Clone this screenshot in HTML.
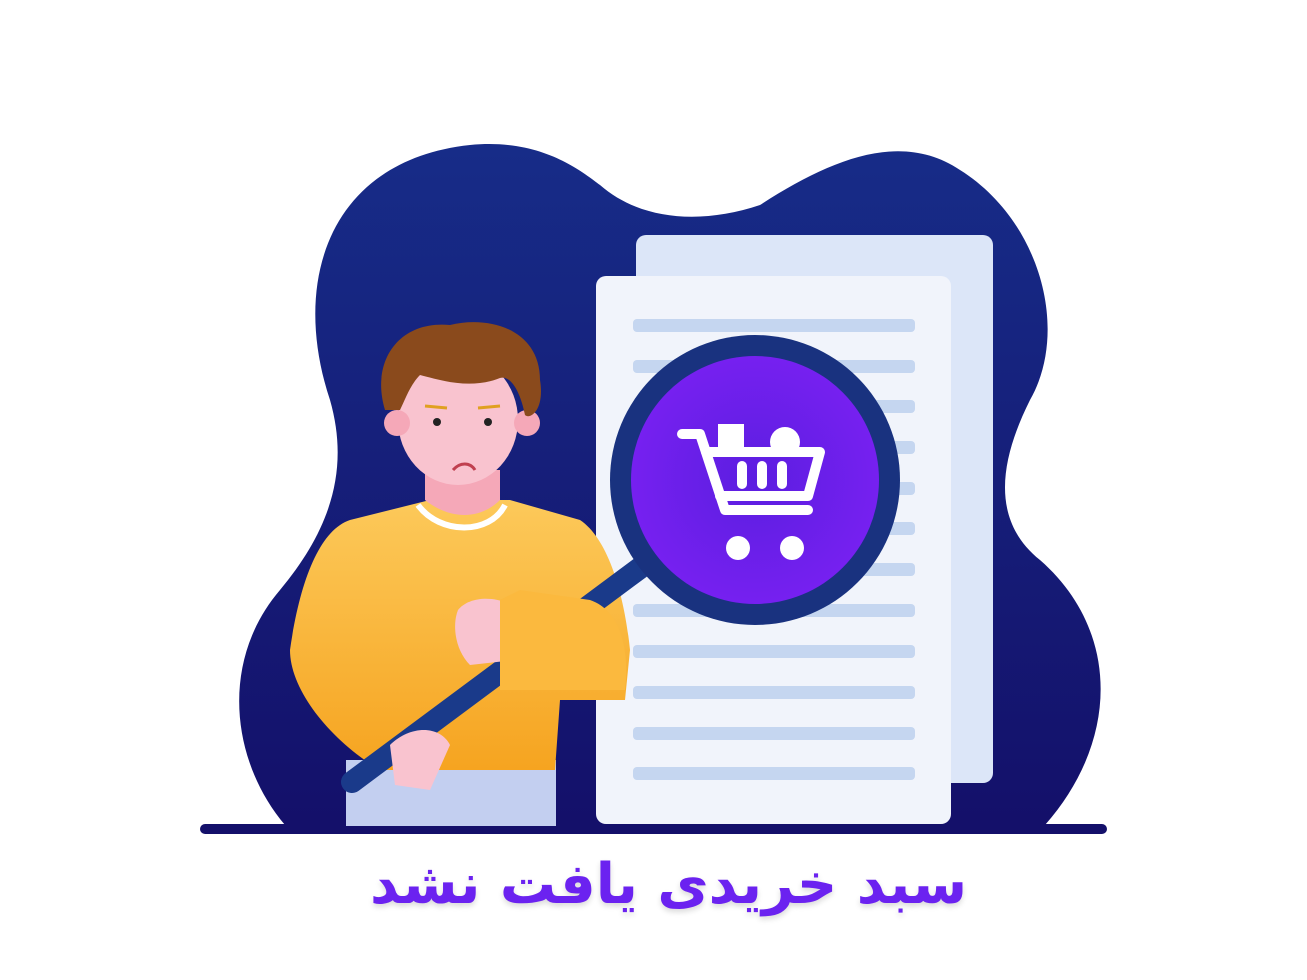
<!DOCTYPE html>
<html><head><meta charset="utf-8"><style>
html,body{margin:0;padding:0;background:#fff;}
body{width:1307px;height:980px;position:relative;overflow:hidden;}
.t{position:absolute;left:0;width:1337px;top:852px;text-align:center;direction:rtl;font-family:"DejaVu Sans",sans-serif;font-weight:bold;font-size:56px;letter-spacing:1px;color:#6b22f0;text-shadow:0 3px 6px rgba(0,0,0,0.15);}
</style></head><body>
<svg width="1307" height="980" viewBox="0 0 1307 980" style="position:absolute;left:0;top:0">
<defs>
<linearGradient id="bg" x1="0" y1="0" x2="0" y2="1"><stop offset="0" stop-color="#172c88"/><stop offset="1" stop-color="#14106a"/></linearGradient>
<linearGradient id="sw" x1="0" y1="0" x2="0" y2="1"><stop offset="0" stop-color="#fcc95a"/><stop offset="1" stop-color="#f6a420"/></linearGradient>
<radialGradient id="lens" cx="0.5" cy="0.5" r="0.5"><stop offset="0" stop-color="#5b1ee0"/><stop offset="1" stop-color="#7620f0"/></radialGradient>
</defs>
<path d="M285 825 C230 760 220 660 280 590 C330 530 350 470 330 400 C290 280 330 160 470 145 C540 138 580 170 600 185 C640 220 700 225 760 205 C830 160 900 130 960 170 C1040 220 1070 330 1030 400 C1000 460 990 520 1040 560 C1120 630 1120 740 1045 825 Z" fill="url(#bg)"/>
<rect x="200" y="824" width="907" height="10" rx="5" fill="#14106a"/>
<rect x="636" y="235" width="357" height="548" rx="10" fill="#dce6f8"/>
<rect x="596" y="276" width="355" height="548" rx="10" fill="#f1f4fb"/>
<g fill="#c5d6f0">
<rect x="633" y="319" width="282" height="13" rx="4"/>
<rect x="633" y="360" width="282" height="13" rx="4"/>
<rect x="633" y="400" width="282" height="13" rx="4"/>
<rect x="633" y="441" width="282" height="13" rx="4"/>
<rect x="633" y="482" width="282" height="13" rx="4"/>
<rect x="633" y="522" width="282" height="13" rx="4"/>
<rect x="633" y="563" width="282" height="13" rx="4"/>
<rect x="633" y="604" width="282" height="13" rx="4"/>
<rect x="633" y="645" width="282" height="13" rx="4"/>
<rect x="633" y="686" width="282" height="13" rx="4"/>
<rect x="633" y="727" width="282" height="13" rx="4"/>
<rect x="633" y="767" width="282" height="13" rx="4"/>
</g>
<rect x="346" y="760" width="210" height="66" fill="#c3cff0"/>
<path d="M290 650 C300 580 320 530 350 520 L430 500 L510 500 L580 520 C610 540 625 600 630 650 L625 700 L560 700 L555 770 L380 770 C330 740 290 690 290 650 Z" fill="url(#sw)"/>
<path d="M418 505 C440 535 490 535 505 505" fill="none" stroke="#fff" stroke-width="6"/>
<path d="M425 470 L425 500 C450 520 480 520 500 500 L500 470 Z" fill="#f5a8b8"/>
<line x1="352" y1="782" x2="640" y2="568" stroke="#1a3a8a" stroke-width="22" stroke-linecap="round"/>
<circle cx="755" cy="480" r="145" fill="#19327f"/>
<circle cx="755" cy="480" r="124" fill="url(#lens)"/>
<g fill="none" stroke="#fff" stroke-width="10" stroke-linecap="round" stroke-linejoin="round">
<path d="M682 434 L700 434 L725 510 L808 510"/>
<path d="M706 452 L820 452 L808 496 L720 496"/>
<line x1="742" y1="466" x2="742" y2="484"/><line x1="762" y1="466" x2="762" y2="484"/><line x1="782" y1="466" x2="782" y2="484"/>
</g>
<rect x="718" y="424" width="26" height="24" fill="#fff"/>
<circle cx="785" cy="442" r="15" fill="#fff"/>
<circle cx="738" cy="548" r="12" fill="#fff"/><circle cx="792" cy="548" r="12" fill="#fff"/>
<ellipse cx="458" cy="420" rx="60" ry="65" fill="#f9c3cf"/>
<circle cx="397" cy="423" r="13" fill="#f5a8b8"/><circle cx="527" cy="423" r="13" fill="#f5a8b8"/>
<path d="M385 410 C370 360 400 320 450 325 C490 315 540 330 540 380 C545 410 530 420 525 415 C520 390 510 375 500 378 C470 390 440 380 420 375 C410 385 405 400 400 410 Z" fill="#8a4a1c"/>
<circle cx="437" cy="422" r="4" fill="#222"/><circle cx="488" cy="422" r="4" fill="#222"/>
<path d="M425 406 L447 408 M478 408 L500 406" stroke="#e0a020" stroke-width="3"/>
<path d="M453 470 C460 462 470 462 475 470" fill="none" stroke="#c04050" stroke-width="3"/>
<path d="M458 610 C470 595 500 595 520 610 L515 660 L470 665 C455 650 452 625 458 610 Z" fill="#f9c3cf"/>
<path d="M500 600 L520 590 L590 600 C620 610 630 650 625 690 L500 690 Z" fill="#fbb93e"/>
<path d="M390 745 C410 725 440 725 450 745 L430 790 L395 785 Z" fill="#f9c3cf"/>
</svg>
<div class="t">سبد خریدی یافت نشد</div>
</body></html>
